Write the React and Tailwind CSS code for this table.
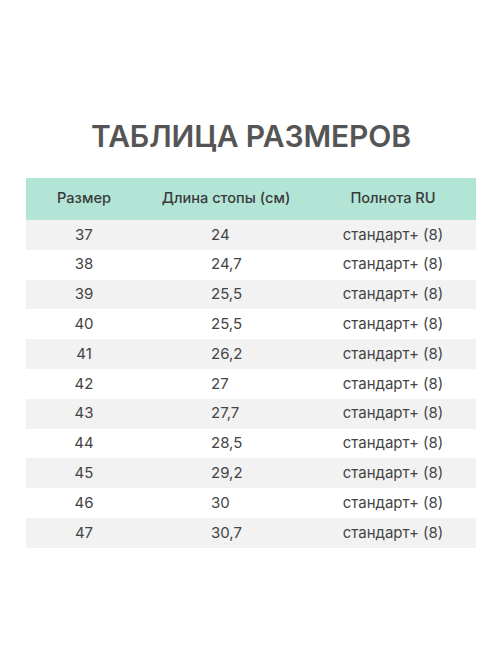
const rows = [
  ["37", "24"],
  ["38", "24,7"],
  ["39", "25,5"],
  ["40", "25,5"],
  ["41", "26,2"],
  ["42", "27"],
  ["43", "27,7"],
  ["44", "28,5"],
  ["45", "29,2"],
  ["46", "30"],
  ["47", "30,7"],
];

export default function App() {
  return (
    <div className="w-[502px] h-[669px] bg-white flex flex-col items-center font-['Inter',sans-serif]">
      {/* Title */}
      <h1 className="mt-[116px] text-[30px] leading-[40px] font-semibold tracking-[-0.1px] text-[#555555]">
        ТАБЛИЦА РАЗМЕРОВ
      </h1>

      {/* Table */}
      <div className="mt-[22px] w-[450px]">
        <div className="grid grid-cols-[116px_168px_166px] h-[42px] items-center bg-[#b3e5d7] text-[#3a3a3a] text-[14.6px] font-medium">
          <div className="text-center">Размер</div>
          <div className="text-center">Длина стопы (см)</div>
          <div className="text-center">Полнота RU</div>
        </div>
        {rows.map(([size, len], i) => (
          <div
            key={size}
            className={
              "grid grid-cols-[116px_168px_166px] h-[29.8px] items-center text-[15px] text-[#444444] " +
              (i % 2 === 0 ? "bg-[#f2f2f2]" : "bg-white")
            }
          >
            <div className="text-center">{size}</div>
            <div className="pl-[69px]">{len}</div>
            <div className="text-center">стандарт+ (8)</div>
          </div>
        ))}
      </div>
    </div>
  );
}
